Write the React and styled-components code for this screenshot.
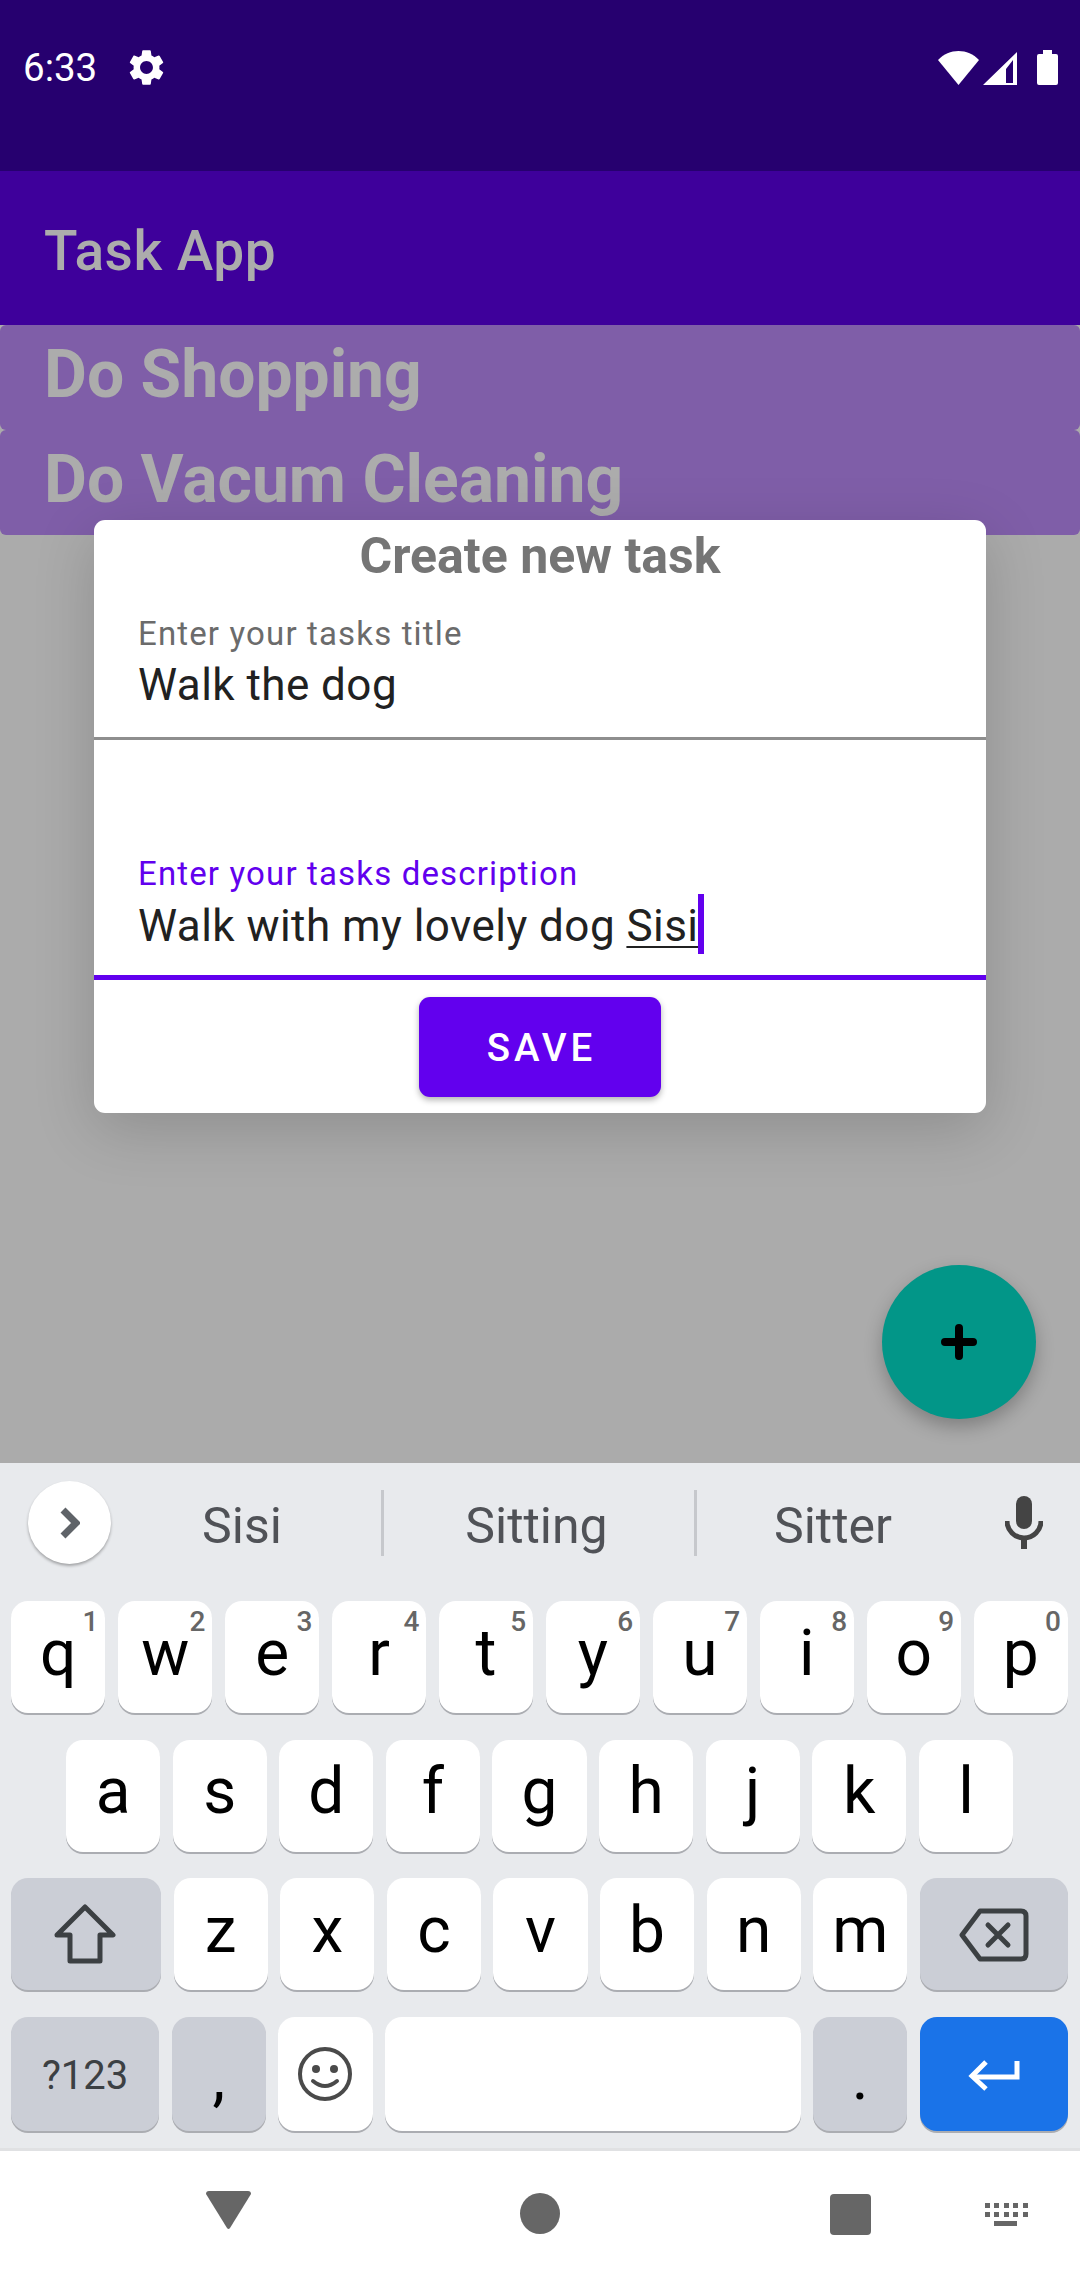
import React from "react";
import styled, { createGlobalStyle } from "styled-components";
import { MdSettings } from "react-icons/md";

const GlobalStyle = createGlobalStyle`
    body {
        margin: 0;
        background: #ababab;
        font-family: Roboto, "Noto Sans", sans-serif;
    }
`;

const Page = styled.div`
    width: 1080px;
    height: 2280px;
    display: flex;
    flex-direction: column;
    overflow: hidden;
    background: #ababab;
`;

const StatusBar = styled.div`
    height: 171px;
    flex: none;
    box-sizing: border-box;
    padding: 0 22px 36px 23px;
    display: flex;
    align-items: center;
    background: #26006f;
    color: #fff;
`;

const Clock = styled.span`
    font-size: 38.5px;
    line-height: 44px;
`;

const GearIcon = styled(MdSettings)`
    width: 43px;
    height: 43px;
    margin-left: 28px;
`;

const StatusIcons = styled.div`
    margin-left: auto;
    display: flex;
    align-items: flex-end;
    gap: 4px;
`;

const BatteryIcon = styled.svg`
    margin-left: 16px;
`;

const AppBar = styled.div`
    height: 154px;
    flex: none;
    box-sizing: border-box;
    padding: 6px 44px 0;
    display: flex;
    align-items: center;
    background: #3e009b;
    color: #acacac;
    font-size: 55px;
    font-weight: 500;
    letter-spacing: 0.5px;
`;

const TaskCard = styled.div`
    height: 105px;
    flex: none;
    box-sizing: border-box;
    padding: 0 44px 6px;
    display: flex;
    align-items: center;
    border-radius: 6px;
    background: #7f5ea8;
    color: #acacac;
    font-size: 66px;
    font-weight: 700;
`;

const Content = styled.div`
    flex: 1;
    position: relative;
`;

const Dialog = styled.div`
    position: absolute;
    left: 94px;
    top: -15px;
    width: 892px;
    border-radius: 11px;
    background: #fff;
    box-shadow: 0 16px 60px rgba(0, 0, 0, 0.17);
    display: flex;
    flex-direction: column;
`;

const DialogTitle = styled.div`
    height: 70px;
    padding-top: 1px;
    box-sizing: border-box;
    line-height: 70px;
    text-align: center;
    color: #757575;
    font-size: 50px;
    font-weight: 700;
`;

const Field = styled.div`
    height: ${(props) => props.$height}px;
    box-sizing: border-box;
    padding: 0 44px ${(props) => (props.$focused ? 21 : 22)}px;
    display: flex;
    flex-direction: column;
    justify-content: flex-end;
    border-bottom: ${(props) => (props.$focused ? "5px solid #6200ee" : "3px solid #8e8e8e")};
`;

const FieldLabel = styled.div`
    height: 44px;
    line-height: ${(props) => (props.$focused ? 48 : 46)}px;
    font-size: 33px;
    letter-spacing: 1.15px;
    color: ${(props) => (props.$focused ? "#6200ee" : "#6b6b6b")};
`;

const FieldValue = styled.div`
    height: 60px;
    line-height: 60px;
    font-size: 44px;
    letter-spacing: 0.45px;
    white-space: nowrap;
    color: #212121;
`;

const Composing = styled.span`
    text-decoration: underline;
    text-decoration-thickness: 2px;
    text-underline-offset: 5px;
`;

const Cursor = styled.span`
    display: inline-block;
    width: 6px;
    height: 60px;
    vertical-align: -13px;
    background: #6200ee;
`;

const SaveButton = styled.button`
    width: 242px;
    height: 100px;
    margin: 17px auto 16px;
    padding: 0 0 0 3px;
    border: 0;
    border-radius: 11px;
    background: #6200ee;
    color: #fff;
    font-family: inherit;
    font-size: 38.5px;
    font-weight: 500;
    letter-spacing: 3.9px;
    box-shadow: 0 3px 6px rgba(0, 0, 0, 0.3);
`;

const Fab = styled.button`
    position: absolute;
    right: 44px;
    bottom: 44px;
    width: 154px;
    height: 154px;
    padding: 0;
    border: 0;
    border-radius: 50%;
    display: flex;
    align-items: center;
    justify-content: center;
    background: #029688;
    box-shadow: 0 8px 18px rgba(0, 0, 0, 0.25);
`;

const Keyboard = styled.div`
    height: 688px;
    flex: none;
    box-sizing: border-box;
    border-bottom: 3px solid #e0e1e3;
    background: #e8eaed;
`;

const SuggestionStrip = styled.div`
    height: 138px;
    box-sizing: border-box;
    padding: 0 0 19px 28px;
    display: flex;
    align-items: center;
`;

const ExpandButton = styled.div`
    width: 83px;
    height: 83px;
    flex: none;
    border-radius: 50%;
    display: flex;
    align-items: center;
    justify-content: center;
    background: #fff;
    box-shadow: 0 2px 3px rgba(0, 0, 0, 0.3);
`;

const Suggestion = styled.div`
    width: ${(props) => props.$width}px;
    flex: none;
    box-sizing: border-box;
    padding: 6px ${(props) => props.$shift}px 0 0;
    text-align: center;
    font-size: 50px;
    line-height: 60px;
    color: #505257;
`;

const StripDivider = styled.div`
    width: 3px;
    height: 66px;
    flex: none;
    background: #c6c8cc;
`;

const MicIcon = styled.svg`
    margin-left: 36px;
`;

const KeyRows = styled.div`
    display: flex;
    flex-direction: column;
    gap: 26.5px;
`;

const KeyRow = styled.div`
    height: ${(props) => (props.$bottom ? 114 : 112)}px;
    padding: ${(props) => (props.$inset ? "0 67px 0 66px" : "0 12px 0 11px")};
    display: flex;
    gap: 12.5px;
`;

const Key = styled.div`
    flex: ${(props) => props.$grow || 1} 1 0;
    position: relative;
    box-sizing: border-box;
    padding: ${(props) => props.$padding || "0"};
    display: flex;
    align-items: center;
    justify-content: center;
    border-radius: 17px;
    background: ${(props) => props.$bg || "#fff"};
    box-shadow: 0 2px 0 #abadb2;
    font-size: 64px;
    color: #000;
`;

const KeyHint = styled.span`
    position: absolute;
    top: 7px;
    right: 7px;
    font-size: 28px;
    line-height: 28px;
    font-weight: 500;
    color: #666;
`;

const SymbolLabel = styled.span`
    font-size: 40px;
    color: #3c4043;
`;

const NavBar = styled.div`
    height: 129px;
    flex: none;
    box-sizing: border-box;
    padding: 40px 0 0 206px;
    display: flex;
    align-items: flex-start;
    background: #fff;
`;

const NavIcon = styled.svg`
    flex: none;
    margin-left: ${(props) => props.$gap || 0}px;
    margin-top: ${(props) => props.$top || 0}px;
`;

const topRow = [
    ["q", "1"], ["w", "2"], ["e", "3"], ["r", "4"], ["t", "5"],
    ["y", "6"], ["u", "7"], ["i", "8"], ["o", "9"], ["p", "0"],
];
const middleRow = ["a", "s", "d", "f", "g", "h", "j", "k", "l"];
const lowerRow = ["z", "x", "c", "v", "b", "n", "m"];
const letterPadding = "0 0 8px";

function App() {
    return (
        <Page>
            <GlobalStyle />
            <StatusBar>
                <Clock>6:33</Clock>
                <GearIcon />
                <StatusIcons>
                    <svg width="41" height="34" viewBox="0 0 41 34">
                        <path d="M0 9 C11 -3 30 -3 41 9 L20.5 34 Z" fill="#fff" />
                    </svg>
                    <svg width="34" height="33" viewBox="0 0 34 33">
                        <path fillRule="evenodd" d="M0 33 L34 0 V33 Z M23 31 H30 V8 L23 17 Z" fill="#fff" />
                    </svg>
                    <BatteryIcon width="21" height="35" viewBox="0 0 21 35">
                        <path d="M6 0 H15 V4 H19 Q21 4 21 6 V33 Q21 35 19 35 H2 Q0 35 0 33 V6 Q0 4 2 4 H6 Z" fill="#fff" />
                    </BatteryIcon>
                </StatusIcons>
            </StatusBar>

            <AppBar>Task App</AppBar>
            <TaskCard>Do Shopping</TaskCard>
            <TaskCard>Do Vacum Cleaning</TaskCard>

            <Content>
                <Dialog>
                    <DialogTitle>Create new task</DialogTitle>
                    <Field $height={150}>
                        <FieldLabel>Enter your tasks title</FieldLabel>
                        <FieldValue>Walk the dog</FieldValue>
                    </Field>
                    <Field $height={240} $focused>
                        <FieldLabel $focused>Enter your tasks description</FieldLabel>
                        <FieldValue>
                            Walk with my lovely dog <Composing>Sisi</Composing>
                            <Cursor />
                        </FieldValue>
                    </Field>
                    <SaveButton>SAVE</SaveButton>
                </Dialog>
                <Fab>
                    <svg width="36" height="36" viewBox="0 0 36 36">
                        <path d="M18 4 V32 M4 18 H32" stroke="#000" strokeWidth="8" strokeLinecap="round" />
                    </svg>
                </Fab>
            </Content>

            <Keyboard>
                <SuggestionStrip>
                    <ExpandButton>
                        <svg width="20" height="32" viewBox="0 0 20 32">
                            <path d="M3 3 L16 16 L3 29" fill="none" stroke="#5f6368" strokeWidth="7" />
                        </svg>
                    </ExpandButton>
                    <Suggestion $width={270} $shift={8}>Sisi</Suggestion>
                    <StripDivider />
                    <Suggestion $width={310} $shift={5}>Sitting</Suggestion>
                    <StripDivider />
                    <Suggestion $width={272} $shift={0}>Sitter</Suggestion>
                    <MicIcon width="38" height="53" viewBox="0 0 38 53">
                        <rect x="11" y="0" width="16" height="33" rx="8" fill="#444" />
                        <path d="M2 25 A17 17 0 0 0 36 25" fill="none" stroke="#444" strokeWidth="5" />
                        <rect x="16" y="41" width="6" height="12" fill="#444" />
                    </MicIcon>
                </SuggestionStrip>

                <KeyRows>
                    <KeyRow>
                        {topRow.map(([letter, hint]) => (
                            <Key key={letter} $padding={letterPadding}>
                                {letter}
                                <KeyHint>{hint}</KeyHint>
                            </Key>
                        ))}
                    </KeyRow>
                    <KeyRow $inset>
                        {middleRow.map((letter) => (
                            <Key key={letter} $padding={letterPadding}>{letter}</Key>
                        ))}
                    </KeyRow>
                    <KeyRow>
                        <Key $grow={148} $bg="#cbced6" $padding="2px 2px 0 0">
                            <svg width="64" height="62" viewBox="0 0 64 62">
                                <path d="M32 3 L60 31 H47 V57 H17 V31 H4 Z" fill="none" stroke="#3c4043" strokeWidth="5" strokeLinejoin="round" />
                            </svg>
                        </Key>
                        {lowerRow.map((letter) => (
                            <Key key={letter} $grow={94} $padding={letterPadding}>{letter}</Key>
                        ))}
                        <Key $grow={148} $bg="#cbced6" $padding="2px 0 0">
                            <svg width="70" height="54" viewBox="0 0 70 54">
                                <path d="M21 3 H62 Q67 3 67 8 V46 Q67 51 62 51 H21 L3 27 Z" fill="none" stroke="#3c4043" strokeWidth="5" strokeLinejoin="round" />
                                <path d="M29 17 L49 37 M49 17 L29 37" stroke="#3c4043" strokeWidth="5" strokeLinecap="round" />
                            </svg>
                        </Key>
                    </KeyRow>
                    <KeyRow $bottom>
                        <Key $grow={148} $bg="#cbced6" $padding="3px 0 0">
                            <SymbolLabel>?123</SymbolLabel>
                        </Key>
                        <Key $grow={94} $bg="#cbced6" $padding="8px 0 0">,</Key>
                        <Key $grow={94} $padding="1px 0 0">
                            <svg width="54" height="54" viewBox="0 0 54 54">
                                <circle cx="27" cy="27" r="25" fill="none" stroke="#4a4a4a" strokeWidth="4" />
                                <circle cx="18" cy="22" r="4" fill="#4a4a4a" />
                                <circle cx="36" cy="22" r="4" fill="#4a4a4a" />
                                <path d="M15 34 Q27 44 39 34" fill="none" stroke="#4a4a4a" strokeWidth="4" strokeLinecap="round" />
                            </svg>
                        </Key>
                        <Key $grow={415} />
                        <Key $grow={94} $bg="#cbced6" $padding="8px 0 0">.</Key>
                        <Key $grow={148} $bg="#1a73e8" $padding="2px 0 0">
                            <svg width="52" height="32" viewBox="0 0 52 32">
                                <path d="M49 2 V18 H6" fill="none" stroke="#fff" strokeWidth="5" />
                                <path d="M18 3 L4 17 L18 30" fill="none" stroke="#fff" strokeWidth="5" />
                            </svg>
                        </Key>
                    </KeyRow>
                </KeyRows>
            </Keyboard>

            <NavBar>
                <NavIcon width="45" height="39" viewBox="0 0 45 39">
                    <path d="M3 0 H42 Q45 0 45 3 L24 37 Q22.5 39 21 37 L0 3 Q0 0 3 0 Z" fill="#666" />
                </NavIcon>
                <NavIcon width="40" height="41" viewBox="0 0 40 41" $gap={269} $top={2}>
                    <ellipse cx="20" cy="20.5" rx="20" ry="20.5" fill="#666" />
                </NavIcon>
                <NavIcon width="41" height="41" viewBox="0 0 41 41" $gap={270} $top={3}>
                    <rect width="41" height="41" rx="4" fill="#666" />
                </NavIcon>
                <NavIcon width="43" height="23" viewBox="0 0 43 23" $gap={114} $top={12}>
                    <path d="M0 0 h5 v5 h-5 Z M9 0 h5 v5 h-5 Z M19 0 h5 v5 h-5 Z M28 0 h5 v5 h-5 Z M38 0 h5 v5 h-5 Z M0 9 h5 v5 h-5 Z M9 9 h5 v5 h-5 Z M19 9 h5 v5 h-5 Z M28 9 h5 v5 h-5 Z M38 9 h5 v5 h-5 Z M9 18 h23 v5 h-23 Z" fill="#666" />
                </NavIcon>
            </NavBar>
        </Page>
    );
}

export default App;
